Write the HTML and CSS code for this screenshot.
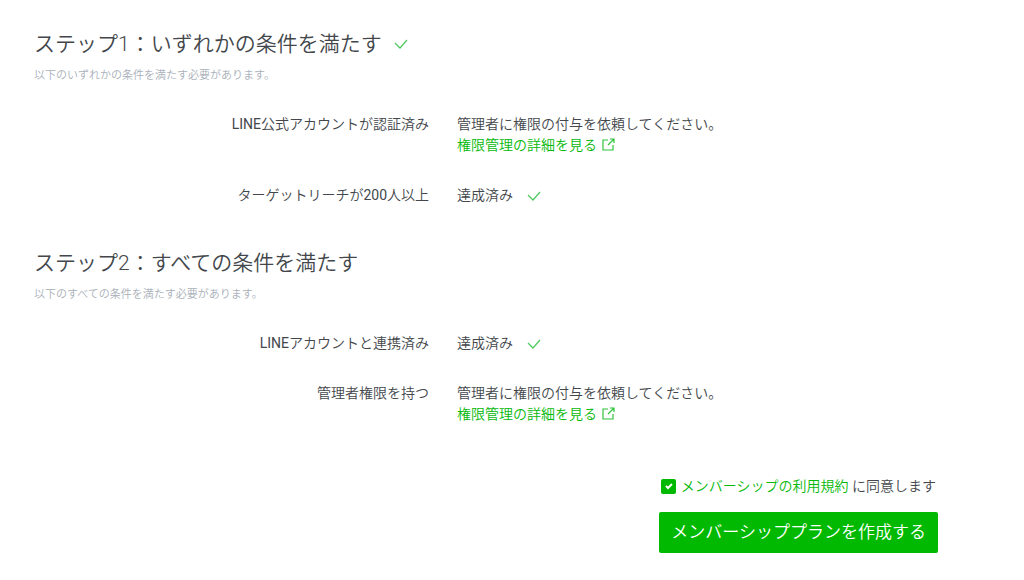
FILE: index.html
```html
<!DOCTYPE html>
<html lang="ja">
<head>
    <meta charset="UTF-8">
    <title>メンバーシップ</title>
    <link rel="stylesheet" href="styles.css">
</head>
<body>
    <main class="content">
        <section class="step">
            <h2 class="step-title">ステップ1：いずれかの条件を満たす
                <svg class="check" viewBox="0 0 14 10"><path d="M1 4l5 5 7-8"/></svg>
            </h2>
            <p class="step-note">以下のいずれかの条件を満たす必要があります。</p>
            <dl class="conditions">
                <dt><span class="latin">LINE</span>公式アカウントが認証済み</dt>
                <dd>
                    管理者に権限の付与を依頼してください。<br>
                    <a class="link" href="#">権限管理の詳細を見る<svg class="external" viewBox="0 0 13 13"><path d="M6 2H1v10h10V7M8 1h4v4M12 1L6 7"/></svg></a>
                </dd>
                <dt>ターゲットリーチが<span class="latin">200</span>人以上</dt>
                <dd class="done">達成済み<svg class="check" viewBox="0 0 14 10"><path d="M1 4l5 5 7-8"/></svg></dd>
            </dl>
        </section>

        <section class="step">
            <h2 class="step-title">ステップ2：すべての条件を満たす</h2>
            <p class="step-note">以下のすべての条件を満たす必要があります。</p>
            <dl class="conditions">
                <dt><span class="latin">LINE</span>アカウントと連携済み</dt>
                <dd class="done">達成済み<svg class="check" viewBox="0 0 14 10"><path d="M1 4l5 5 7-8"/></svg></dd>
                <dt>管理者権限を持つ</dt>
                <dd>
                    管理者に権限の付与を依頼してください。<br>
                    <a class="link" href="#">権限管理の詳細を見る<svg class="external" viewBox="0 0 13 13"><path d="M6 2H1v10h10V7M8 1h4v4M12 1L6 7"/></svg></a>
                </dd>
            </dl>
        </section>

        <form class="agreement">
            <div class="agree">
                <input type="checkbox" id="agree" class="agree-box" checked>
                <label for="agree"><a class="link" href="#">メンバーシップの利用規約</a> に同意します</label>
            </div>
            <button type="button" class="button">メンバーシッププランを作成する</button>
        </form>
    </main>
</body>
</html>
```
FILE: styles.css
```css
body {
    margin: 0;
    background-color: #ffffff;
    color: #43474b;
    font-family: Roboto, "Noto Sans CJK JP", sans-serif;
    font-size: 14px;
    font-weight: 350;
    line-height: 21px;
}

.content {
    padding: 28px 86px 24px 34px;
}

.step {
    margin-bottom: 41px;
}

.step-title {
    display: flex;
    align-items: center;
    gap: 12px;
    margin: 0;
    font-size: 21px;
    font-weight: 350;
    line-height: 32px;
}

.step-note {
    margin: 5px 0 28px;
    color: #a9b0b9;
    font-size: 11px;
}

/* label column on the left, state on the right */
.conditions {
    display: grid;
    grid-template-columns: 395fr 481fr;
    column-gap: 28px;
    row-gap: 29px;
    margin: 0;
}

.conditions dt {
    text-align: right;
}

.conditions dd {
    margin: 0;
}

.conditions .done {
    display: flex;
    align-items: center;
    gap: 14px;
}

.latin {
    font-weight: 400;
}

.check {
    width: 14px;
    height: 10px;
    fill: none;
    stroke: #4cc95f;
    stroke-width: 1.2;
}

.link {
    color: #06b90a;
    text-decoration: none;
}

.external {
    width: 13px;
    height: 13px;
    margin-left: 5px;
    vertical-align: -1px;
    fill: none;
    stroke: #2fc43c;
    stroke-width: 1.2;
}

.agreement {
    display: flex;
    flex-direction: column;
    align-items: flex-end;
    gap: 15px;
    margin-top: 51px;
}

.agree {
    display: flex;
    align-items: center;
    gap: 5px;
    padding-right: 2px;
}

.agree-box {
    appearance: none;
    width: 15px;
    height: 15px;
    margin: 0;
    border-radius: 2px;
    background: #00b900 url("data:image/svg+xml,%3Csvg xmlns='http://www.w3.org/2000/svg' viewBox='0 0 15 15'%3E%3Cpath d='M5 7l2 2 4-4' fill='none' stroke='white' stroke-width='2'/%3E%3C/svg%3E") center no-repeat;
}

.button {
    padding: 8px 12px;
    border: none;
    border-radius: 2px;
    background-color: #00b900;
    color: #ffffff;
    font-family: inherit;
    font-size: 17px;
    font-weight: 350;
    line-height: 25px;
    cursor: pointer;
}
```
